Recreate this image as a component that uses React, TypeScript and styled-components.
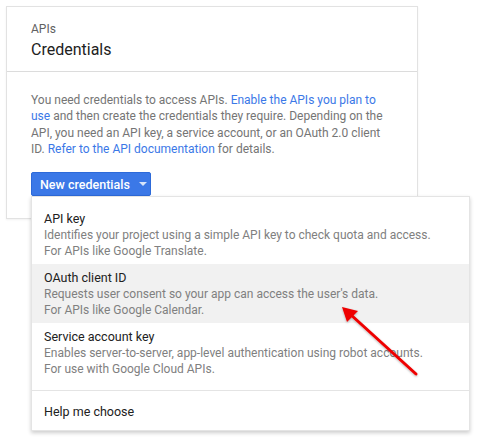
import React from "react";
import styled, { createGlobalStyle } from "styled-components";

const Global = createGlobalStyle`
  html, body { margin: 0; padding: 0; background: #fff; }
  body { font-family: Roboto, "Noto Sans", Arial, sans-serif; -webkit-font-smoothing: antialiased; }
`;

const Page = styled.div`
  position: relative;
  width: 479px;
  height: 439px;
  padding: 6px;
  box-sizing: border-box;
`;

const Card = styled.section`
  width: 412px;
  height: 213px;
  box-sizing: border-box;
  border: 1px solid #e2e2e2;
  box-shadow: 0 1px 2px rgba(0, 0, 0, 0.06);
  background: #fff;
`;

const Header = styled.header`
  height: 65px;
  box-sizing: border-box;
  padding: 15px 24px 0;
  border-bottom: 1px solid #dcdcdc;
`;

const Eyebrow = styled.div`
  font-size: 12px;
  line-height: 14px;
  color: #616161;
`;

const Title = styled.h1`
  margin: 4px 0 0;
  font-size: 16px;
  line-height: 20px;
  font-weight: 400;
  color: #212121;
`;

const Body = styled.div`
  padding: 20px 24px 0;
`;

const Text = styled.p`
  margin: 0;
  font-size: 12px;
  line-height: 16.3px;
  color: #757575;
`;

const Link = styled.a`
  color: #3b78e7;
  text-decoration: none;
`;

const Dropdown = styled.div`
  position: relative;
  display: inline-block;
  margin-top: 15px;
`;

const Button = styled.button`
  display: flex;
  align-items: center;
  gap: 9px;
  height: 24px;
  width: 120px;
  padding: 0 0 0 8px;
  border: 1px solid #2d6ad9;
  border-radius: 2px;
  background: #3b78e7;
  color: #fff;
  font-family: inherit;
  font-size: 12.5px;
  font-weight: 500;
  box-sizing: border-box;
`;

const Caret = styled.span`
  width: 0;
  height: 0;
  border-left: 4px solid transparent;
  border-right: 4px solid transparent;
  border-top: 4px solid rgba(255, 255, 255, 0.8);
`;

const Menu = styled.ul`
  position: absolute;
  top: 100%;
  left: 0;
  width: 439px;
  margin: 0;
  padding: 8px 0 0;
  list-style: none;
  background: #fff;
  box-sizing: border-box;
  border: 1px solid #e4e4e4;
  box-shadow: 0 2px 4px rgba(0, 0, 0, 0.2);
  z-index: 2;
`;

const Item = styled.li<{ $active?: boolean }>`
  padding: 6px 12px 5px;
  background: ${(p) => (p.$active ? "#f1f1f1" : "transparent")};
`;

const ItemTitle = styled.div`
  font-size: 12.5px;
  line-height: 16px;
  color: #212121;
`;

const ItemDesc = styled.div`
  font-size: 12px;
  line-height: 16px;
  color: #808080;
`;

const Divider = styled.li`
  height: 1px;
  margin-top: 8px;
  background: #e4e4e4;
`;

const HelpItem = styled.li`
  padding: 13px 12px 10px;
  font-size: 12.5px;
  line-height: 16px;
  color: #212121;
`;

const Arrow = styled.svg`
  position: absolute;
  left: 0;
  top: 0;
  pointer-events: none;
  z-index: 3;
`;

const items = [
  {
    title: "API key",
    lines: [
      "Identifies your project using a simple API key to check quota and access.",
      "For APIs like Google Translate.",
    ],
  },
  {
    title: "OAuth client ID",
    lines: [
      "Requests user consent so your app can access the user's data.",
      "For APIs like Google Calendar.",
    ],
    active: true,
  },
  {
    title: "Service account key",
    lines: [
      "Enables server-to-server, app-level authentication using robot accounts.",
      "For use with Google Cloud APIs.",
    ],
  },
];

export default function App() {
  return (
    <Page>
      <Global />
      <Card>
        <Header>
          <Eyebrow>APIs</Eyebrow>
          <Title>Credentials</Title>
        </Header>
        <Body>
          <Text>
            You need credentials to access APIs.{" "}
            <Link>Enable the APIs you plan to use</Link> and then create the
            credentials they require. Depending on the API, you need an API
            key, a service account, or an OAuth 2.0 client ID.{" "}
            <Link>Refer to the API documentation</Link> for details.
          </Text>
          <Dropdown>
            <Button>
              New credentials
              <Caret />
            </Button>
            <Menu>
              {items.map((it) => (
                <Item key={it.title} $active={it.active}>
                  <ItemTitle>{it.title}</ItemTitle>
                  {it.lines.map((l) => (
                    <ItemDesc key={l}>{l}</ItemDesc>
                  ))}
                </Item>
              ))}
              <Divider />
              <HelpItem>Help me choose</HelpItem>
            </Menu>
          </Dropdown>
        </Body>
      </Card>
      <Arrow width="479" height="439" viewBox="0 0 479 439">
        <defs>
          <filter id="sh" x="-20%" y="-20%" width="140%" height="140%">
            <feDropShadow dx="0" dy="1" stdDeviation="1" floodColor="#000" floodOpacity="0.3" />
          </filter>
        </defs>
        <g filter="url(#sh)">
          <line x1="416" y1="374" x2="350" y2="314" stroke="#ee0000" strokeWidth="3" strokeLinecap="round" />
          <polygon points="342,307 358,311 347,322" fill="#ee0000" />
        </g>
      </Arrow>
    </Page>
  );
}
